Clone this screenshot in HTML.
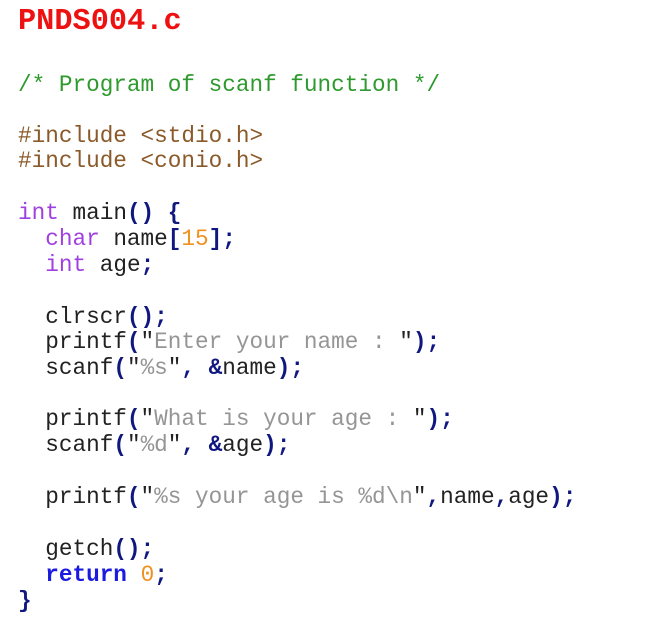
<!DOCTYPE html>
<html><head><meta charset="utf-8"><style>
body{margin:0;background:#fff;width:664px;height:633px;overflow:hidden;position:relative;font-family:"Liberation Mono","Courier New",monospace;}
.l{position:absolute;left:18px;font-size:22.7px;line-height:26px;white-space:pre;color:#222;}
.t{position:absolute;left:18px;top:5px;font-size:30.3px;line-height:34px;font-weight:bold;color:#ee1111;white-space:pre;}
.c{color:#2e9a2e}.p{color:#8a5a2a}.k{color:#a040e0}.b{color:#101880;font-weight:bold}.n{color:#f09020}.s{color:#959595}.r{color:#1a1ae0;font-weight:bold}
</style></head><body>
<div class="t">PNDS004.c</div>
<div class="l c" style="top:72px">/* Program of scanf function */</div>
<div class="l p" style="top:123px">#include &lt;stdio.h&gt;</div>
<div class="l p" style="top:148px">#include &lt;conio.h&gt;</div>
<div class="l" style="top:200px"><span class="k">int</span> main<span class="b">()</span> <span class="b">{</span></div>
<div class="l" style="top:226px">  <span class="k">char</span> name<span class="b">[</span><span class="n">15</span><span class="b">]</span><span class="b">;</span></div>
<div class="l" style="top:252px">  <span class="k">int</span> age<span class="b">;</span></div>
<div class="l" style="top:304px">  clrscr<span class="b">()</span><span class="b">;</span></div>
<div class="l" style="top:329px">  printf<span class="b">(</span>"<span class="s">Enter your name : </span>"<span class="b">)</span><span class="b">;</span></div>
<div class="l" style="top:355px">  scanf<span class="b">(</span>"<span class="s">%s</span>"<span class="b">,</span> <span class="b">&amp;</span>name<span class="b">)</span><span class="b">;</span></div>
<div class="l" style="top:406px">  printf<span class="b">(</span>"<span class="s">What is your age : </span>"<span class="b">)</span><span class="b">;</span></div>
<div class="l" style="top:432px">  scanf<span class="b">(</span>"<span class="s">%d</span>"<span class="b">,</span> <span class="b">&amp;</span>age<span class="b">)</span><span class="b">;</span></div>
<div class="l" style="top:484px">  printf<span class="b">(</span>"<span class="s">%s your age is %d\n</span>"<span class="b">,</span>name<span class="b">,</span>age<span class="b">)</span><span class="b">;</span></div>
<div class="l" style="top:536px">  getch<span class="b">()</span><span class="b">;</span></div>
<div class="l" style="top:562px">  <span class="r">return</span> <span class="n">0</span><span class="b">;</span></div>
<div class="l" style="top:588px"><span class="b">}</span></div>
</body></html>
